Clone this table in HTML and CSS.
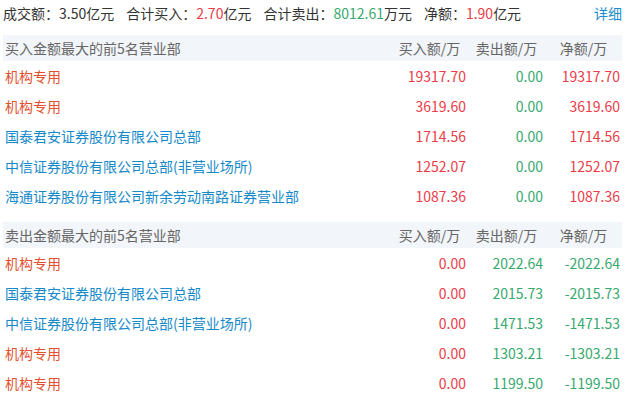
FILE: index.html
```html
<!DOCTYPE html>
<html lang="zh-CN">
<head>
<meta charset="utf-8">
<link rel="stylesheet" href="styles.css">
</head>
<body>
<div class="panel">
  <div class="summary">
    <span class="item">成交额：3.50亿元</span>
    <span class="item">合计买入：<span class="red">2.70</span>亿元</span>
    <span class="item">合计卖出：<span class="green">8012.61</span>万元</span>
    <span class="item">净额：<span class="red">1.90</span>亿元</span>
    <a class="detail">详细</a>
  </div>

  <div class="table">
    <div class="head">
      <span class="name">买入金额最大的前5名营业部</span>
      <span class="hc">买入额/万</span>
      <span class="hc">卖出额/万</span>
      <span class="hc">净额/万</span>
    </div>
    <div class="row"><span class="name org">机构专用</span><span class="num red">19317.70</span><span class="num green">0.00</span><span class="num red">19317.70</span></div>
    <div class="row"><span class="name org">机构专用</span><span class="num red">3619.60</span><span class="num green">0.00</span><span class="num red">3619.60</span></div>
    <div class="row"><span class="name blue">国泰君安证券股份有限公司总部</span><span class="num red">1714.56</span><span class="num green">0.00</span><span class="num red">1714.56</span></div>
    <div class="row"><span class="name blue">中信证券股份有限公司总部(非营业场所)</span><span class="num red">1252.07</span><span class="num green">0.00</span><span class="num red">1252.07</span></div>
    <div class="row"><span class="name blue">海通证券股份有限公司新余劳动南路证券营业部</span><span class="num red">1087.36</span><span class="num green">0.00</span><span class="num red">1087.36</span></div>
  </div>

  <div class="table second">
    <div class="head">
      <span class="name">卖出金额最大的前5名营业部</span>
      <span class="hc">买入额/万</span>
      <span class="hc">卖出额/万</span>
      <span class="hc">净额/万</span>
    </div>
    <div class="row"><span class="name org">机构专用</span><span class="num red">0.00</span><span class="num green">2022.64</span><span class="num green">-2022.64</span></div>
    <div class="row"><span class="name blue">国泰君安证券股份有限公司总部</span><span class="num red">0.00</span><span class="num green">2015.73</span><span class="num green">-2015.73</span></div>
    <div class="row"><span class="name blue">中信证券股份有限公司总部(非营业场所)</span><span class="num red">0.00</span><span class="num green">1471.53</span><span class="num green">-1471.53</span></div>
    <div class="row"><span class="name org">机构专用</span><span class="num red">0.00</span><span class="num green">1303.21</span><span class="num green">-1303.21</span></div>
    <div class="row"><span class="name org">机构专用</span><span class="num red">0.00</span><span class="num green">1199.50</span><span class="num green">-1199.50</span></div>
  </div>
</div>
</body>
</html>
```

FILE: styles.css
```css
* { box-sizing: border-box; }
body {
  margin: 0;
  background: #fff;
  font-family: "Noto Sans CJK SC", "Noto Sans", sans-serif;
  font-size: 14px;
  color: #333;
}
.panel {
  width: 626px;
  padding: 0 4px 0 3px;
}
.summary {
  display: flex;
  height: 26px;
  line-height: 26px;
  gap: 12px;
  color: #333;
}
.detail {
  margin-left: auto;
  color: #1a8dcc;
  cursor: pointer;
}
.red { color: #eb3c48; }
.green { color: #37a86e; }
.blue { color: #1689c9; }
.org { color: #e3502e; }
.table {
  margin-top: 9px;
}
.table.second {
  margin-top: 11px;
}
.head, .row {
  display: grid;
  grid-template-columns: 1fr 77px 77px 77px;
  padding: 0 2px;
  white-space: nowrap;
}
.head {
  height: 26px;
  line-height: 26px;
  background: #f2f5f9;
  color: #666;
}
.row {
  height: 30px;
  line-height: 30px;
}
.hc {
  text-align: center;
  padding-left: 4px;
}
.num {
  text-align: right;
}
```
